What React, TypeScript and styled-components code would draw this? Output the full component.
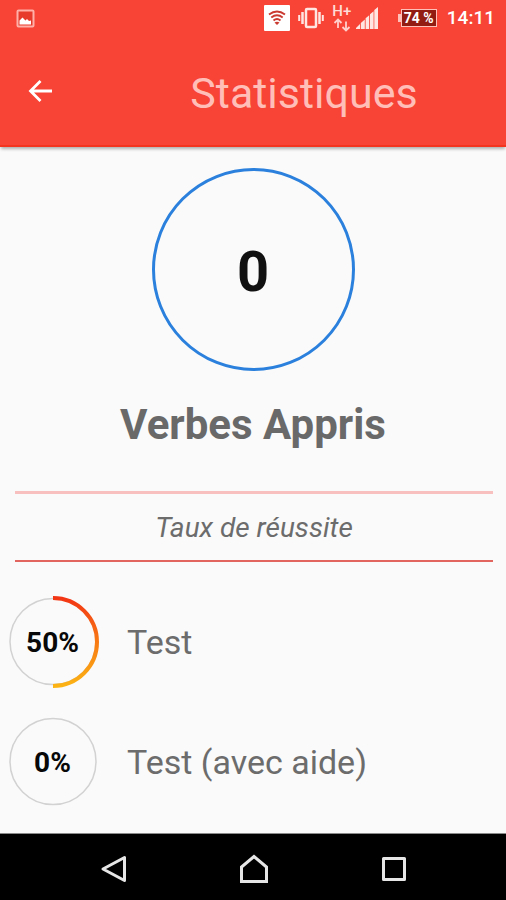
import React from "react";
import styled, { createGlobalStyle } from "styled-components";

const GlobalStyle = createGlobalStyle`
  * { box-sizing: border-box; }
  body {
    margin: 0;
    background: #fafafa;
    font-family: Roboto, "Open Sans", sans-serif;
  }
`;

const Screen = styled.div`
  min-height: 100vh;
  display: flex;
  flex-direction: column;
`;

const StatusBar = styled.div`
  height: 36px;
  padding: 0 11px 0 16px;
  display: flex;
  align-items: center;
  justify-content: space-between;
  background: #f74436;
  color: #fff;
`;

const StatusGroup = styled.div`
  display: flex;
  align-items: center;
  gap: 8px;
`;

const Network = styled.div`
  display: flex;
  align-items: center;
  gap: 4px;
`;

const DataLink = styled.div`
  width: 20px;
  display: flex;
  flex-direction: column;
  align-items: center;
  font-size: 15px;
  line-height: 14px;
  font-weight: 500;
  color: #ffdcd8;
`;

const Battery = styled.div`
  margin: 0 2px 0 12px;
  display: flex;
  align-items: center;

  &::before {
    content: "";
    width: 3px;
    height: 8px;
    background: #ffc0ba;
  }
`;

const BatteryLevel = styled.span`
  width: 36px;
  height: 18px;
  border: 1px solid #ffc0ba;
  background: #921c12;
  color: #fff;
  font-size: 14px;
  line-height: 16px;
  font-weight: 700;
  text-align: center;
  white-space: nowrap;
`;

const Clock = styled.time`
  font-size: 19px;
  line-height: 24px;
  font-weight: 500;
`;

const AppBar = styled.header`
  height: 111px;
  padding-right: 2px;
  display: flex;
  align-items: center;
  background: #f74436;
  border-bottom: 2px solid #f5341f;
  box-shadow: 0 3px 3px -1px rgba(0, 0, 0, 0.3);
`;

const BackButton = styled.button`
  width: 104px;
  height: 56px;
  padding: 0 0 0 26px;
  border: 0;
  display: flex;
  align-items: center;
  background: none;
  color: #fff;
  cursor: pointer;
`;

const Title = styled.h1`
  flex: 1;
  margin: 0;
  padding-top: 4px;
  color: #ffbeb8;
  font-size: 43px;
  line-height: 48px;
  font-weight: 400;
  text-align: center;
`;

const Main = styled.main`
  flex: 1;
  padding: 21px 0;
  display: flex;
  flex-direction: column;
`;

const Summary = styled.section`
  display: flex;
  flex-direction: column;
  align-items: center;
  gap: 28px;
`;

const Counter = styled.div`
  width: 203px;
  height: 203px;
  padding-top: 4px;
  border: 3px solid #2a80dc;
  border-radius: 50%;
  display: flex;
  align-items: center;
  justify-content: center;
  color: #111;
  font-size: 56px;
  line-height: 64px;
  font-weight: 700;
`;

const CounterLabel = styled.h2`
  margin: 0;
  color: #696969;
  font-size: 42px;
  line-height: 52px;
  font-weight: 700;
`;

const SectionTitle = styled.h3`
  margin: 40px 13px 34px 15px;
  padding-top: 2px;
  border-top: 3px solid #f8c1bf;
  border-bottom: 2px solid #e2665f;
  color: #6c6c6c;
  font-size: 28px;
  line-height: 64px;
  font-weight: 400;
  font-style: italic;
  text-align: center;
`;

const Results = styled.ul`
  margin: 0;
  padding: 0 8px;
  list-style: none;
  display: flex;
  flex-direction: column;
  gap: 28px;
`;

const Result = styled.li`
  display: flex;
  align-items: center;
  gap: 27px;
  color: #6c6c6c;
  font-size: 34px;
  line-height: 40px;
`;

const Gauge = styled.div`
  display: grid;
  place-items: center;
  width: 92px;
  height: 92px;

  > * {
    grid-area: 1 / 1;
  }
`;

const GaugeValue = styled.span`
  padding: 2px 3px 0 0;
  color: #080808;
  font-size: 28px;
  line-height: 32px;
  font-weight: 700;
`;

const NavBar = styled.nav`
  height: 67px;
  padding: 4px 42px 0 44px;
  border-top: 1px solid #8a8a8a;
  display: flex;
  background: #000;
`;

const NavButton = styled.button`
  flex: 1;
  padding: 0;
  border: 0;
  display: flex;
  align-items: center;
  justify-content: center;
  background: none;
  color: #e6e6e6;
  cursor: pointer;
`;

const PictureIcon = () => (
  <svg width="19" height="19" viewBox="0 0 19 19" aria-hidden="true">
    <rect x="1.5" y="1.5" width="16" height="16" rx="1" fill="#e83a2c" stroke="#ffb0a8" strokeWidth="2" />
    <path d="M3.5 15.5v-4l3-3 3 3 1.500-1.500 2 2 2-.5v4z" fill="#fff" />
  </svg>
);

const WifiIcon = () => (
  <svg width="26" height="26" viewBox="0 0 26 26" aria-hidden="true">
    <rect width="26" height="26" rx="1" fill="#fff" />
    <g fill="none" stroke="#ca3a30" strokeWidth="1.900">
      <path d="M5 9.500Q13 3.500 21 9.500" />
      <path d="M7.300 12.500Q13 8 18.700 12.500" />
      <path d="M9.500 15.500Q13 12.500 16.500 15.500" />
    </g>
    <path d="M10.500 17.500Q13 15.800 15.500 17.500L13 20z" fill="#ca3a30" />
  </svg>
);

const VibrateIcon = () => (
  <svg width="26" height="22" viewBox="0 0 26 22" fill="none" stroke="#ffe6e3" aria-hidden="true">
    <rect x="8" y="2" width="10" height="18" rx="1" strokeWidth="2.500" />
    <path d="M4.500 5v12M21.500 5v12" strokeWidth="2.500" />
    <path d="M1.200 8v6M24.800 8v6" strokeWidth="2" />
  </svg>
);

const TransferIcon = () => (
  <svg width="18" height="14" viewBox="0 0 18 14" fill="none" stroke="#ffd0cb" strokeWidth="1.800" aria-hidden="true">
    <path d="M5 10V2M1.500 5 5 1.500 8.500 5" />
    <path d="M13 3.500V12M9.500 9 13 12.500 16.500 9" />
  </svg>
);

const SignalIcon = () => (
  <svg width="22" height="22" viewBox="0 0 22 22" fill="#ffe6e3" aria-hidden="true">
    <path d="M0 22v-1l4-4v5zM4.800 22v-6l4-3.600V22zM9.600 22V11.300l3.600-3V22zM14 22V7.200l3.600-3V22zM18.300 22V3L22 0v22z" />
  </svg>
);

const BackArrowIcon = () => (
  <svg width="28" height="28" viewBox="0 0 28 28" fill="none" stroke="currentColor" strokeWidth="2.800" aria-hidden="true">
    <path d="M26 14H5M14.500 4 4.500 14l10 10" />
  </svg>
);

function GaugeRing({ value }: { value: number }) {
  const id = React.useId();
  return (
    <svg width="92" height="92" viewBox="0 0 92 92" fill="none" aria-hidden="true">
      <defs>
        <linearGradient id={id} gradientUnits="userSpaceOnUse" x1="90" y1="0" x2="0" y2="0">
          <stop offset="0" stopColor="#f23414" />
          <stop offset="0.5" stopColor="#f87a14" />
          <stop offset="1" stopColor="#fbb414" />
        </linearGradient>
      </defs>
      <circle cx="45" cy="45.500" r="43" stroke="#d2d2d2" strokeWidth="1.500" />
      {value > 0 && (
        <circle
          cx="45"
          cy="46"
          r="44"
          pathLength="100"
          strokeDasharray={`${value} 100`}
          transform="rotate(-90 45 46)"
          stroke={`url(#${id})`}
          strokeWidth="4"
        />
      )}
    </svg>
  );
}

const results = [
  { label: "Test", value: 50 },
  { label: "Test (avec aide)", value: 0 },
];

export default function App() {
  return (
    <Screen>
      <GlobalStyle />
      <StatusBar>
        <PictureIcon />
        <StatusGroup>
          <WifiIcon />
          <VibrateIcon />
          <Network>
            <DataLink>
              H+
              <TransferIcon />
            </DataLink>
            <SignalIcon />
          </Network>
          <Battery>
            <BatteryLevel>74 %</BatteryLevel>
          </Battery>
          <Clock>14:11</Clock>
        </StatusGroup>
      </StatusBar>
      <AppBar>
        <BackButton type="button" aria-label="Retour">
          <BackArrowIcon />
        </BackButton>
        <Title>Statistiques</Title>
      </AppBar>
      <Main>
        <Summary>
          <Counter>0</Counter>
          <CounterLabel>Verbes Appris</CounterLabel>
        </Summary>
        <SectionTitle>Taux de réussite</SectionTitle>
        <Results>
          {results.map(({ label, value }) => (
            <Result key={label}>
              <Gauge>
                <GaugeRing value={value} />
                <GaugeValue>{value}%</GaugeValue>
              </Gauge>
              {label}
            </Result>
          ))}
        </Results>
      </Main>
      <NavBar>
        <NavButton type="button" aria-label="Précédent">
          <svg width="28" height="28" viewBox="0 0 28 28" fill="none" stroke="currentColor" strokeWidth="3" strokeLinejoin="round">
            <path d="M24.500 2.500v23L3 14z" />
          </svg>
        </NavButton>
        <NavButton type="button" aria-label="Accueil">
          <svg width="30" height="30" viewBox="0 0 30 30" fill="none" stroke="currentColor" strokeWidth="3">
            <path d="M2.500 27.500V13L15 2.500 27.500 13v14.500z" />
          </svg>
        </NavButton>
        <NavButton type="button" aria-label="Applications récentes">
          <svg width="26" height="26" viewBox="0 0 26 26" fill="none" stroke="currentColor" strokeWidth="3" strokeLinejoin="round">
            <rect x="2.500" y="2.500" width="21" height="21" />
          </svg>
        </NavButton>
      </NavBar>
    </Screen>
  );
}
